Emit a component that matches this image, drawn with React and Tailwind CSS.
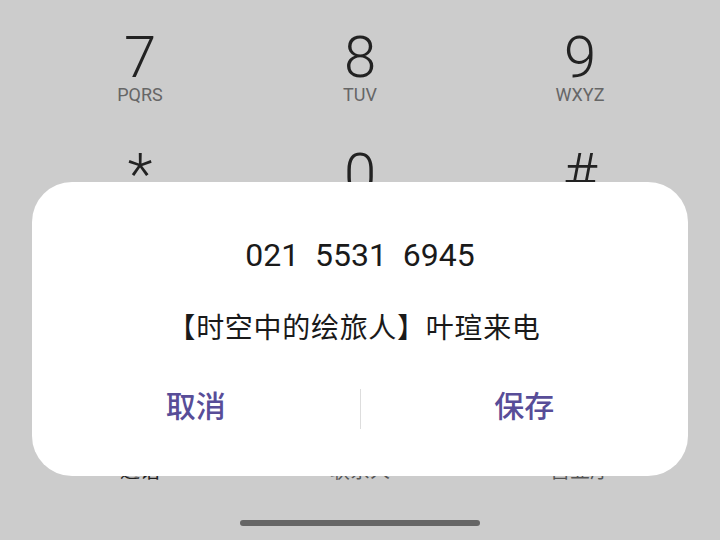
import React from 'react';

const keys = [
  { d: '7', l: 'PQRS' },
  { d: '8', l: 'TUV' },
  { d: '9', l: 'WXYZ' },
  { d: '*', l: '' },
  { d: '0', l: '' },
  { d: '#', l: '' },
];

const tabs = [
  { t: '通话', active: true },
  { t: '联系人', active: false },
  { t: '营业厅', active: false },
];

export default function App() {
  return (
    <div
      className="relative w-[720px] h-[540px] overflow-hidden bg-[#cccccc] flex flex-col"
      style={{ fontFamily: 'Roboto, "Noto Sans CJK SC", sans-serif' }}
    >
      {/* Dial pad behind the dialog */}
      <div className="grid grid-cols-3 px-[30px] pt-[28px]">
        {keys.map((k) => (
          <div key={k.d} className="h-[117px] flex flex-col items-center">
            <span className="text-[58px] leading-[58px] font-light text-[#222222]">{k.d}</span>
            {k.l && <span className="text-[18px] leading-[18px] text-[#666666]">{k.l}</span>}
          </div>
        ))}
      </div>

      {/* Bottom tabs */}
      <div className="mt-auto grid grid-cols-3 px-[30px]">
        {tabs.map((tab) => (
          <div
            key={tab.t}
            className={`text-center text-[20px] leading-[24px] ${tab.active ? 'text-[#222222]' : 'text-[#555555]'}`}
            style={{ fontFamily: '"Noto Sans CJK SC", sans-serif' }}
          >
            {tab.t}
          </div>
        ))}
      </div>

      {/* Home indicator */}
      <div className="mx-auto mt-[38px] mb-[14px] w-[240px] h-[6px] rounded-full bg-[#666666]" />

      {/* Save contact dialog */}
      <div className="absolute left-[32px] right-[32px] top-[182px] h-[294px] bg-white rounded-[40px] flex flex-col items-center pt-[53px]">
        <div className="text-[32px] leading-[40px] text-[#1a1a1a] whitespace-pre">
          {'021  5531  6945'}
        </div>
        <div
          className="mt-[33px] ml-[-12px] text-[28px] leading-[36px] text-[#1a1a1a] tracking-[0.7px]"
          style={{ fontFamily: '"Noto Sans CJK SC", sans-serif' }}
        >
          【时空中的绘旅人】叶瑄来电
        </div>
        <div
          className="mt-[40px] w-full flex items-center h-[40px]"
          style={{ fontFamily: '"Noto Sans CJK SC", sans-serif' }}
        >
          <button className="flex-1 text-[30px] leading-[40px] font-medium text-[#584d98]">取消</button>
          <div className="w-px h-[40px] bg-[#dddddd] mt-[10px]" />
          <button className="flex-1 text-[30px] leading-[40px] font-medium text-[#584d98]">保存</button>
        </div>
      </div>
    </div>
  );
}
